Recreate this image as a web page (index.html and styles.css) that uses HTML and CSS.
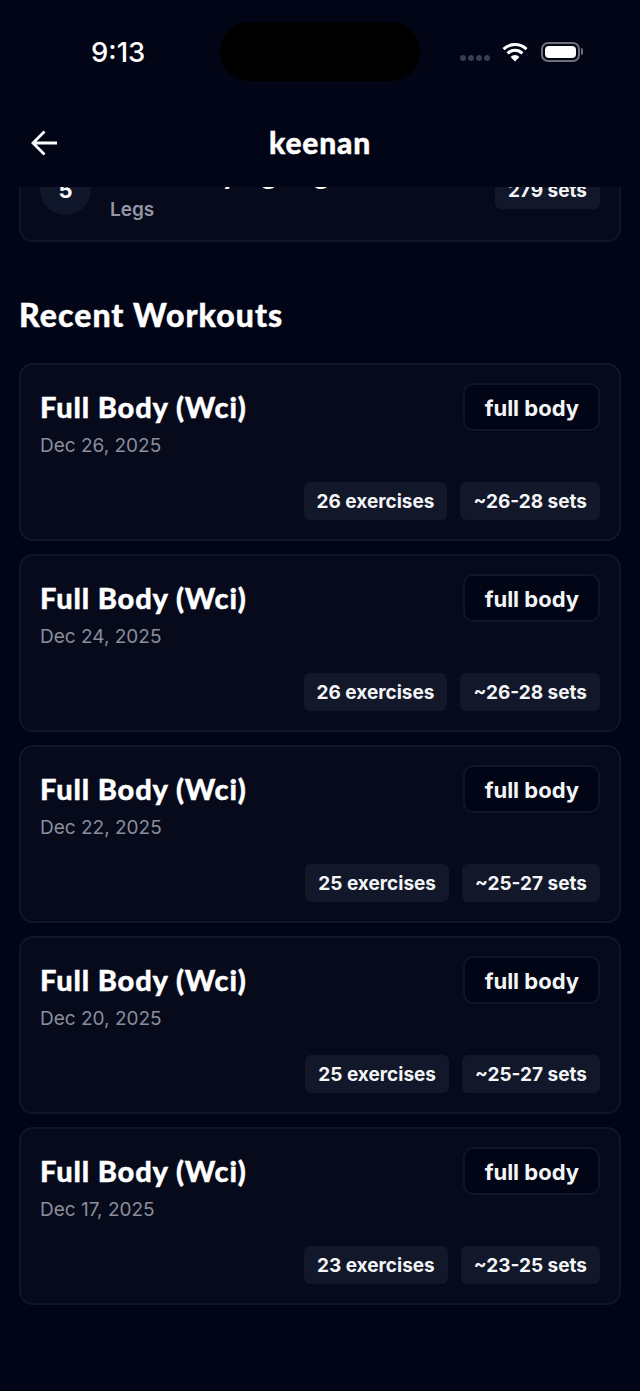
FILE: index.html
```html
<!DOCTYPE html>
<html lang="en">
<head>
    <meta charset="UTF-8">
    <meta name="viewport" content="width=device-width, initial-scale=1.0">
    <title>keenan</title>
    <link rel="stylesheet" href="styles.css">
</head>
<body>
    <div class="app">
        <div class="status-bar">
            <span class="clock">9:13</span>
            <div class="island"></div>
            <div class="status-icons">
                <div class="signal"><i></i><i></i><i></i><i></i></div>
                <svg class="wifi" width="26" height="20" viewBox="0 0 26 20">
                    <path d="M1.5 7.2a16.5 16.5 0 0 1 23 0M5.6 11.3a10.7 10.7 0 0 1 14.8 0" fill="none" stroke="#fff" stroke-width="3"/>
                    <path d="M13 19.5l-4.4-4.6a6.3 6.3 0 0 1 8.8 0z" fill="#fff"/>
                </svg>
                <div class="battery"><div class="battery-fill"></div></div>
                <div class="battery-cap"></div>
            </div>
        </div>
        <header class="nav">
            <svg class="back" width="28" height="28" viewBox="0 0 28 28">
                <path d="M26 14H2.5M13.5 2.5L2 14l11.5 11.5" fill="none" stroke="#fff" stroke-width="2.8"/>
            </svg>
            <h1>keenan</h1>
        </header>
        <main class="scroll">
            <div class="scroll-inner">
                <div class="card top-card">
                    <div class="rank">5</div>
                    <div class="top-info">
                        <div class="top-name">Barbell Lying Leg Curl</div>
                        <div class="top-group">Legs</div>
                    </div>
                    <span class="chip">279 sets</span>
                </div>

                <h2>Recent Workouts</h2>

                <div class="list">
                    <div class="card workout">
                        <div class="row">
                            <div>
                                <div class="name">Full Body (Wci)</div>
                                <div class="date">Dec 26, 2025</div>
                            </div>
                            <span class="type">full body</span>
                        </div>
                        <div class="chips">
                            <span class="chip">26 exercises</span>
                            <span class="chip">~26-28 sets</span>
                        </div>
                    </div>
                    <div class="card workout">
                        <div class="row">
                            <div>
                                <div class="name">Full Body (Wci)</div>
                                <div class="date">Dec 24, 2025</div>
                            </div>
                            <span class="type">full body</span>
                        </div>
                        <div class="chips">
                            <span class="chip">26 exercises</span>
                            <span class="chip">~26-28 sets</span>
                        </div>
                    </div>
                    <div class="card workout">
                        <div class="row">
                            <div>
                                <div class="name">Full Body (Wci)</div>
                                <div class="date">Dec 22, 2025</div>
                            </div>
                            <span class="type">full body</span>
                        </div>
                        <div class="chips">
                            <span class="chip">25 exercises</span>
                            <span class="chip">~25-27 sets</span>
                        </div>
                    </div>
                    <div class="card workout">
                        <div class="row">
                            <div>
                                <div class="name">Full Body (Wci)</div>
                                <div class="date">Dec 20, 2025</div>
                            </div>
                            <span class="type">full body</span>
                        </div>
                        <div class="chips">
                            <span class="chip">25 exercises</span>
                            <span class="chip">~25-27 sets</span>
                        </div>
                    </div>
                    <div class="card workout">
                        <div class="row">
                            <div>
                                <div class="name">Full Body (Wci)</div>
                                <div class="date">Dec 17, 2025</div>
                            </div>
                            <span class="type">full body</span>
                        </div>
                        <div class="chips">
                            <span class="chip">23 exercises</span>
                            <span class="chip">~23-25 sets</span>
                        </div>
                    </div>
                </div>
            </div>
        </main>
    </div>
</body>
</html>
```

FILE: styles.css
```css
* {
    box-sizing: border-box;
}

html, body {
    margin: 0;
    padding: 0;
    background-color: #020515;
}

body {
    font-family: Inter, "Liberation Sans", sans-serif;
    color: #fff;
}

.app {
    width: 640px;
    height: 1391px;
    display: flex;
    flex-direction: column;
    overflow: hidden;
}

.status-bar {
    height: 100px;
    flex-shrink: 0;
    display: flex;
    justify-content: space-between;
    padding: 22px 57px 0 91px;
    position: relative;
}

.clock {
    font-size: 27.5px;
    font-weight: 500;
    line-height: 60px;
}

.island {
    position: absolute;
    left: 220px;
    top: 22px;
    width: 200px;
    height: 59px;
    border-radius: 30px;
    background-color: #000;
}

.status-icons {
    display: flex;
    align-items: center;
    height: 59px;
}

.signal {
    display: flex;
    gap: 2px;
    margin: 12px 12px 0 0;
}

.signal i {
    width: 6px;
    height: 6px;
    border-radius: 50%;
    background-color: #3a3d4d;
}

.wifi {
    margin-right: 13px;
}

.battery {
    width: 39px;
    height: 20px;
    padding: 2px;
    border: 2px solid #6d7079;
    border-radius: 7px;
}

.battery-fill {
    height: 100%;
    border-radius: 4px;
    background-color: #fff;
}

.battery-cap {
    width: 2px;
    height: 7px;
    margin-left: 1px;
    border-radius: 0 2px 2px 0;
    background-color: #6d7079;
}

.nav {
    height: 87px;
    flex-shrink: 0;
    display: flex;
    align-items: center;
    justify-content: center;
    position: relative;
    padding-bottom: 3px;
}

.back {
    position: absolute;
    left: 31px;
    top: 29px;
}

h1 {
    margin: 0;
    font-size: 30px;
    font-weight: 900;
    font-family: Lato, sans-serif;
    letter-spacing: 0.8px;
    -webkit-text-stroke: 0.4px #fff;
}

.scroll {
    flex: 1;
    overflow: hidden;
    padding: 0 19px;
}

.scroll-inner {
    margin-top: -50px;
}

.card {
    background-color: #060a1b;
    border: 2px solid #10152a;
    border-radius: 14px;
}

.top-card {
    height: 105px;
    display: flex;
    align-items: center;
    padding: 0 19px;
}

.rank {
    width: 51px;
    height: 51px;
    border-radius: 50%;
    background-color: #11172a;
    display: flex;
    align-items: center;
    justify-content: center;
    font-size: 22px;
    font-weight: 700;
}

.top-info {
    flex: 1;
    margin-left: 19px;
}

.top-name {
    font-size: 28px;
    font-weight: 900;
    font-family: Lato, sans-serif;
    letter-spacing: 0.5px;
    line-height: 34px;
}

.top-group {
    margin-top: 6px;
    font-size: 19px;
    font-weight: 600;
    color: #9396a5;
    line-height: 28px;
}

.chip {
    height: 38px;
    padding: 1px 13px 0;
    display: inline-flex;
    align-items: center;
    border-radius: 6px;
    background-color: #12172a;
    font-size: 19px;
    font-weight: 700;
    color: #f4f5f7;
    white-space: nowrap;
}

h2 {
    margin: 54px 0 29px;
    font-size: 32px;
    font-weight: 900;
    font-family: Lato, sans-serif;
    letter-spacing: 1.05px;
    -webkit-text-stroke: 0.4px #fff;
    line-height: 38px;
}

.list {
    display: flex;
    flex-direction: column;
    gap: 13px;
}

.workout {
    height: 178px;
    padding: 18px 19px 19px;
    display: flex;
    flex-direction: column;
    justify-content: space-between;
}

.row {
    display: flex;
    justify-content: space-between;
    align-items: flex-start;
}

.name {
    margin-top: 5px;
    font-size: 29px;
    font-weight: 900;
    font-family: Lato, sans-serif;
    letter-spacing: 0.85px;
    -webkit-text-stroke: 0.4px #fff;
    line-height: 38px;
}

.date {
    margin-top: 7px;
    font-size: 19px;
    color: #8b8e9b;
    line-height: 26px;
}

.type {
    height: 48px;
    padding: 1px 19px 0 20px;
    display: flex;
    align-items: center;
    border: 2px solid #10152a;
    border-radius: 10px;
    background-color: #020515;
    font-size: 22px;
    font-weight: 700;
    color: #f4f5f7;
}

.chips {
    display: flex;
    justify-content: flex-end;
    gap: 13px;
}
```
